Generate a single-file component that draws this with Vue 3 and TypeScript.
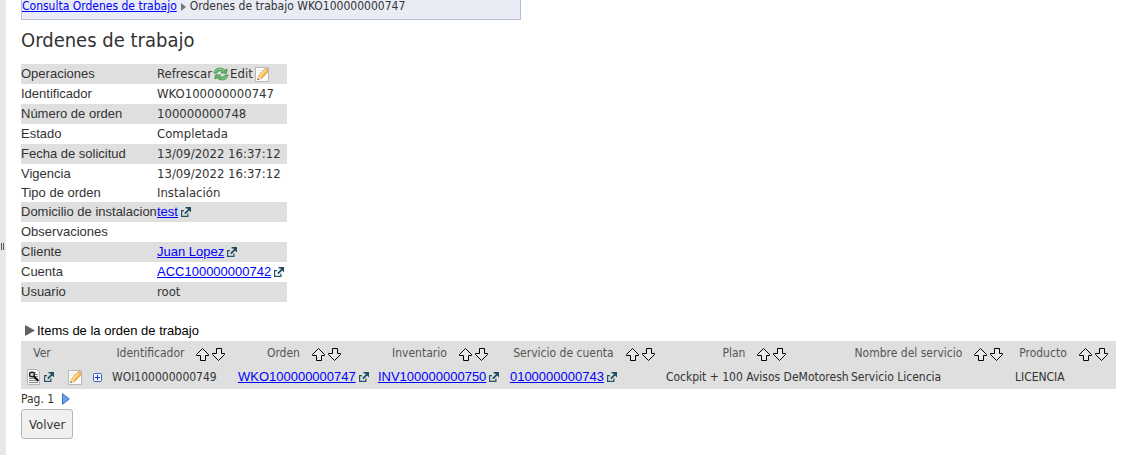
<script setup lang="ts">
interface Field {
  label: string
  value?: string
  link?: boolean
  actions?: boolean
}

interface Column {
  title: string
  width: number
  sortable: boolean
}

const fields: Field[] = [
  { label: 'Operaciones', actions: true },
  { label: 'Identificador', value: 'WKO100000000747' },
  { label: 'Número de orden', value: '100000000748' },
  { label: 'Estado', value: 'Completada' },
  { label: 'Fecha de solicitud', value: '13/09/2022 16:37:12' },
  { label: 'Vigencia', value: '13/09/2022 16:37:12' },
  { label: 'Tipo de orden', value: 'Instalación' },
  { label: 'Domicilio de instalacion', value: 'test', link: true },
  { label: 'Observaciones' },
  { label: 'Cliente', value: 'Juan Lopez', link: true },
  { label: 'Cuenta', value: 'ACC100000000742', link: true },
  { label: 'Usuario', value: 'root' },
]

const shaded = new Set([0, 2, 4, 7, 9, 11])

const columns: Column[] = [
  { title: 'Ver', width: 42, sortable: false },
  { title: '', width: 26, sortable: false },
  { title: '', width: 19, sortable: false },
  { title: 'Identificador', width: 126, sortable: true },
  { title: 'Orden', width: 140, sortable: true },
  { title: 'Inventario', width: 132, sortable: true },
  { title: 'Servicio de cuenta', width: 156, sortable: true },
  { title: 'Plan', width: 185, sortable: true },
  { title: 'Nombre del servicio', width: 164, sortable: true },
  { title: 'Producto', width: 105, sortable: true },
]

const total = columns.reduce((sum, c) => sum + c.width, 0)
const share = (c: Column) => `${(c.width / total) * 100}%`

const itemLinks = ['WKO100000000747', 'INV100000000750', '0100000000743']
const itemTexts = ['Cockpit + 100 Avisos DeMotoresh', 'Servicio Licencia', 'LICENCIA']
</script>

<template>
  <svg class="symbols" aria-hidden="true">
    <symbol id="i-open" viewBox="0 0 10 10">
      <path d="M3 3.6H.6V9.4H6.9V6.6" fill="none" stroke="#23566a" stroke-width="1.2" />
      <path d="M4.6 0H10V5.4L8.2 3.6L4.4 7.2L3.2 6L7 2.2L6.2 1.4H4.6Z" fill="#1d4b60" />
    </symbol>
    <symbol id="i-edit" viewBox="0 0 16 16">
      <path d="M1.5 1.5H14.5V15.5H1.5Z" fill="#fbfbfb" stroke="#b9b9b9" />
      <path d="M4 4.5H9M4 6.5H7" stroke="#e6e6e6" />
      <path d="M3.6 13.4L4.6 10L11.4 2.4L14.6 5L7.6 12.6Z" fill="#f6c04e" stroke="#cf9433" stroke-width=".8" />
      <path d="M5.8 10.2L12 3.4" stroke="#ffe9a8" stroke-width="1.2" />
      <path d="M10.6 3.3L11.6 2.1Q12.4 1.4 13.3 2.1L14.7 3.3Q15.3 4 14.7 4.8L13.8 5.9Z" fill="#e9b184" />
      <path d="M4.6 10L7.6 12.6L3.4 13.6Z" fill="#f3dfbd" />
      <path d="M3.9 12.2L5 13.2L3.2 13.9Z" fill="#4b4039" />
    </symbol>
  </svg>

  <div class="page">
    <aside class="splitter"><span class="grip"></span></aside>
    <main class="content">
      <nav class="crumbs" aria-label="Ruta">
        <a href="#consulta">Consulta Ordenes de trabajo</a>
        <svg class="crumb-arrow" viewBox="0 0 5 8"><path d="M0 0L5 4L0 8Z" fill="#777" /></svg>
        <span>Ordenes de trabajo WKO100000000747</span>
      </nav>

      <h1>Ordenes de trabajo</h1>

      <table class="details">
        <tbody>
          <tr v-for="(f, i) in fields" :key="f.label" :class="{ shaded: shaded.has(i), short: i === 6 }">
            <th scope="row">{{ f.label }}</th>
            <td>
              <div v-if="f.actions" class="actions">
                <button type="button" class="plain">
                  Refrescar
                  <svg width="16" height="16" viewBox="0 0 17 16">
                    <path d="M.9 7Q2.2 1.6 7.2 1.6Q10.6 1.6 12.6 3.8L15.2 2.8L14.2 7.6L8.4 6.8L10.2 5.4Q8.8 4.4 7 4.7Q5.2 5.2 4 7Z" fill="#62b366" stroke="#3b8a43" stroke-width=".7" />
                    <path d="M16.1 9Q14.8 14.4 9.8 14.4Q6.4 14.4 4.4 12.2L1.8 13.2L2.8 8.4L8.6 9.2L6.8 10.6Q8.2 11.6 10 11.3Q11.8 10.8 13 9Z" fill="#62b366" stroke="#3b8a43" stroke-width=".7" />
                    <path d="M2.2 5.8Q4 2.6 7.4 2.6Q10 2.8 11.6 4.6M14.8 10.2Q13 13.2 9.6 13.3" fill="none" stroke="#a6d8a0" stroke-width=".8" />
                  </svg>
                </button>
                <button type="button" class="plain">
                  Edit
                  <svg class="edit"><use href="#i-edit" /></svg>
                </button>
              </div>
              <div v-else-if="f.link" class="linked">
                <a href="#detalle">{{ f.value }}</a>
                <svg class="open"><use href="#i-open" /></svg>
              </div>
              <template v-else>{{ f.value }}</template>
            </td>
          </tr>
        </tbody>
      </table>

      <h2>
        <svg width="10" height="11" viewBox="0 0 10 11"><path d="M0 0L10 5.5L0 11Z" fill="#606060" /></svg>
        Items de la orden de trabajo
      </h2>

      <table class="items">
        <colgroup>
          <col v-for="(c, i) in columns" :key="i" :style="{ width: share(c) }" />
        </colgroup>
        <thead>
          <tr>
            <th v-for="(c, i) in columns" :key="i" scope="col">
              <div class="head">
                <span>{{ c.title }}</span>
                <span v-if="c.sortable" class="sorts">
                  <button type="button" class="plain" :aria-label="`${c.title} ascendente`">
                    <svg class="sort" viewBox="0 0 13 13"><path d="M6.5 .5L12.5 6.5V7.5H9.5V12.5H4.5V7.5H.5V6.5Z" /></svg>
                  </button>
                  <button type="button" class="plain" :aria-label="`${c.title} descendente`">
                    <svg class="sort" viewBox="0 0 13 13"><path d="M6.5 12.5L12.5 6.5V5.5H9.5V.5H4.5V5.5H.5V6.5Z" /></svg>
                  </button>
                </span>
              </div>
            </th>
          </tr>
        </thead>
        <tbody>
          <tr>
            <td class="tools">
              <div class="linked">
                <button type="button" class="plain" aria-label="Ver">
                  <svg width="14" height="16" viewBox="0 0 14 16">
                    <path d="M.5 .5H10L12.5 3V15.5H.5Z" fill="#f7f7f7" stroke="#b4b4b4" />
                    <path d="M2 3.5H9M2 5.5H11M2 7.5H11M2 9.5H11M2 11.5H11M2 13.5H11" stroke="#888" />
                    <circle cx="5" cy="5.5" r="2.4" fill="#ccc" stroke="#111" stroke-width="1.2" />
                    <path d="M7 7.5L11.4 12" stroke="#111" stroke-width="2" />
                  </svg>
                </button>
                <a href="#abrir" aria-label="Abrir"><svg class="open"><use href="#i-open" /></svg></a>
              </div>
            </td>
            <td>
              <button type="button" class="plain" aria-label="Editar"><svg class="edit"><use href="#i-edit" /></svg></button>
            </td>
            <td>
              <button type="button" class="plain" aria-label="Expandir">
                <svg width="9" height="9" viewBox="0 0 9 9">
                  <rect x=".5" y=".5" width="8" height="8" rx="1" fill="#f3f6ff" stroke="#3f5cc8" />
                  <path d="M2 4.5H7M4.5 2V7" stroke="#1d2fc0" />
                </svg>
              </button>
            </td>
            <td>WOI100000000749</td>
            <td v-for="l in itemLinks" :key="l">
              <div class="linked">
                <a href="#item">{{ l }}</a>
                <svg class="open"><use href="#i-open" /></svg>
              </div>
            </td>
            <td v-for="t in itemTexts" :key="t">{{ t }}</td>
          </tr>
        </tbody>
      </table>

      <div class="pager">
        Pag. 1
        <button type="button" class="plain" aria-label="Siguiente">
          <svg width="8" height="12" viewBox="0 0 8 12"><path d="M.5 .7L7.3 6L.5 11.3Z" fill="#6ba3ea" stroke="#3973c0" /></svg>
        </button>
      </div>
      <button type="button" class="back">Volver</button>
    </main>
  </div>
</template>

<style>
body {
  margin: 0;
  background: #fff;
}
</style>

<style scoped>
.symbols {
  position: absolute;
  width: 0;
  height: 0;
}
.page {
  display: flex;
  min-height: 100vh;
  color: #333;
  font-family: "DejaVu Sans Condensed", "Noto Sans", sans-serif;
  font-size: 12px;
}
svg {
  display: block;
  flex: none;
}
a {
  color: #00f;
  text-decoration: underline;
}
.splitter {
  flex: 0 0 6px;
  display: flex;
  align-items: center;
  background: #e7e7e7;
}
.grip {
  width: 1px;
  height: 7px;
  margin: 38px 0 0 1px;
  border: solid #555;
  border-width: 0 1px;
}
.content {
  flex: 1;
  min-width: 0;
  padding: 0 7px 0 15px;
}
.crumbs {
  box-sizing: border-box;
  display: flex;
  align-items: center;
  gap: 4px;
  max-width: 500px;
  height: 20px;
  padding-bottom: 7px;
  border: solid #b9bcd3;
  border-width: 0 1px 1px;
  background: #e9ecf5;
}
.crumb-arrow {
  width: 5px;
  height: 8px;
  margin-top: 2px;
}
h1 {
  margin: 8px 0 11px;
  font-size: 20px;
  font-weight: 400;
  line-height: 25px;
}
table {
  border-collapse: collapse;
}
th,
td {
  padding: 0;
  font-weight: 400;
  text-align: left;
  white-space: nowrap;
}
.details {
  width: 266px;
  table-layout: fixed;
}
.details tr {
  height: 20px;
}
.details tr.short {
  height: 18px;
}
.shaded {
  background: #dfdfdf;
}
.details th {
  width: 136px;
  padding-bottom: 1px;
  font: 13px/16px "Liberation Sans", Arial, sans-serif;
}
.details td {
  font-size: 13px;
  line-height: 16px;
}
.linked,
.actions {
  display: flex;
  align-items: center;
}
.linked {
  gap: 3px;
  font: 13px/16px "Liberation Sans", Arial, sans-serif;
}
.open {
  width: 10px;
  height: 10px;
}
.edit {
  width: 16px;
  height: 16px;
}
.plain {
  display: flex;
  align-items: center;
  padding: 0;
  border: 0;
  background: none;
  color: inherit;
  font: inherit;
}
.actions,
.actions .plain {
  gap: 1px;
}
h2 {
  display: flex;
  align-items: center;
  gap: 2px;
  margin: 20px 0 2px 4px;
  color: #000;
  font: 13px/17px "Liberation Sans", Arial, sans-serif;
}
.items {
  width: 100%;
  table-layout: fixed;
  background: #dfdfdf;
}
.items tr {
  height: 24px;
}
.items td {
  padding-left: 4px;
}
.items .tools {
  padding-left: 6px;
}
.head {
  display: flex;
  justify-content: center;
  gap: 12px;
  color: #555;
}
.sorts {
  display: flex;
  align-items: center;
  gap: 3px;
  padding-top: 2px;
}
.sort {
  width: 13px;
  height: 13px;
}
.sort path {
  fill: #e8e8e8;
  stroke: #000;
}
.pager {
  display: flex;
  align-items: center;
  gap: 8px;
  height: 20px;
}
.back {
  height: 30px;
  padding: 0 7px;
  border: 1px solid #b5b5b5;
  border-radius: 3px;
  background: #f0f0f0;
  color: #333;
  font: inherit;
  font-size: 13px;
}
</style>
